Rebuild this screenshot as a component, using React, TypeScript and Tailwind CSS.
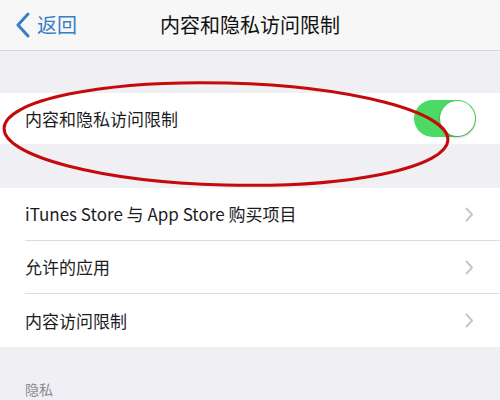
import React from 'react';

const font = { fontFamily: '"Noto Sans CJK SC", "Noto Sans", sans-serif' };

function Chevron() {
    return (
        <svg width="9" height="15" viewBox="0 0 9 15" fill="none">
            <path d="M1.5 1.5L7 7.5L1.5 13.5" stroke="#c7c7cc" strokeWidth="2" strokeLinecap="round" strokeLinejoin="round" />
        </svg>
    );
}

function LinkRow({ label, last = false }: { label: string; last?: boolean }) {
    return (
        <div className="flex h-[53px] items-center bg-white pl-[25px]">
            <div className={`flex h-full flex-1 items-center justify-between pr-[26px] ${last ? '' : 'border-b border-[#dcdce0]'}`}>
                <span className="text-[17px] text-[#1c1c1e]">{label}</span>
                <Chevron />
            </div>
        </div>
    );
}

export default function App() {
    return (
        <div className="relative h-[400px] w-[500px] overflow-hidden bg-[#efeff4]" style={font}>
            {/* Nav bar */}
            <div className="relative flex h-[51px] items-center border-b border-[#d6d6da] bg-[#f7f7f8]">
                <div className="flex items-center pl-[15px]">
                    <svg width="16" height="26" viewBox="0 0 16 26" fill="none">
                        <path d="M13 2L3 13L13 24" stroke="#3a7dc2" strokeWidth="3" strokeLinecap="round" strokeLinejoin="round" />
                    </svg>
                    <span className="ml-[6px] text-[20px] text-[#3a7dc2]">返回</span>
                </div>
                <div className="absolute inset-x-0 text-center text-[20px] text-[#111]">内容和隐私访问限制</div>
            </div>

            <div className="h-[42px]" />

            {/* Toggle row */}
            <div className="flex h-[51px] items-center justify-between bg-white pl-[25px] pr-[24px]">
                <span className="text-[17px] text-[#1c1c1e]">内容和隐私访问限制</span>
                <div className="flex h-[37px] w-[62px] items-center justify-end rounded-full bg-[#4cd964] p-[1px]">
                    <div className="h-[35px] w-[35px] rounded-full bg-white shadow-[0_1px_3px_rgba(0,0,0,0.3)]" />
                </div>
            </div>

            <div className="h-[44px]" />

            <div>
                <LinkRow label="iTunes Store 与 App Store 购买项目" />
                <LinkRow label="允许的应用" />
                <LinkRow label="内容访问限制" last />
            </div>

            <div className="pl-[25px] pt-[32px] text-[14px] text-[#8a8a8f]">隐私</div>

            {/* Red annotation ellipse */}
            <svg className="pointer-events-none absolute left-0 top-0" width="500" height="400">
                <ellipse cx="226" cy="134" rx="222" ry="51" fill="none" stroke="#c40a0a" strokeWidth="3" transform="rotate(1.5 226 134)" />
            </svg>
        </div>
    );
}
